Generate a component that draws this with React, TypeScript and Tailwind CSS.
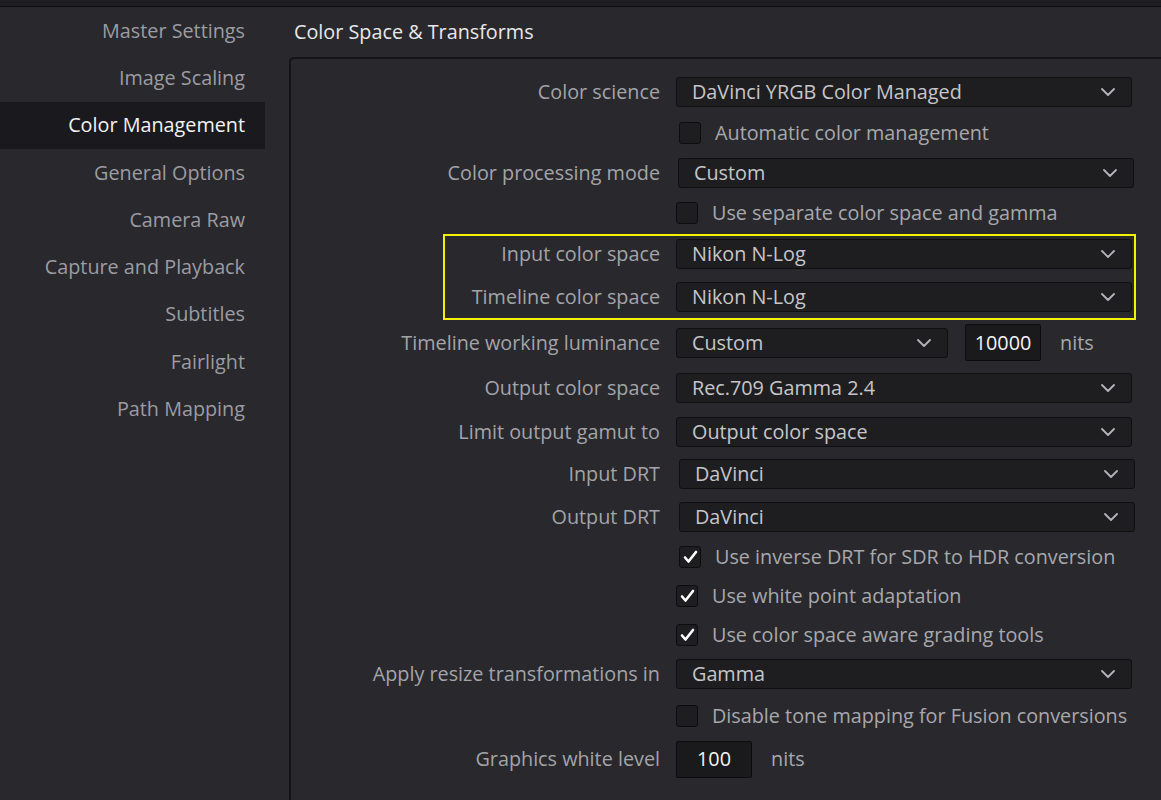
import React from "react";

type Row =
  | { kind: "select"; label: string; value: string; h: string; dx?: string }
  | { kind: "check"; text: string; checked: boolean; h: string; dx?: string }
  | { kind: "luminance"; h: string }
  | { kind: "white"; h: string };

const sidebarItems = [
  "Master Settings",
  "Image Scaling",
  "Color Management",
  "General Options",
  "Camera Raw",
  "Capture and Playback",
  "Subtitles",
  "Fairlight",
  "Path Mapping",
];

const rows: Row[] = [
  { kind: "select", label: "Color science", value: "DaVinci YRGB Color Managed", h: "h-[40.5px]" },
  { kind: "check", text: "Automatic color management", checked: false, h: "h-[40.5px]", dx: "pl-[3px]" },
  { kind: "select", label: "Color processing mode", value: "Custom", h: "h-[40px]", dx: "pl-[2px]" },
  { kind: "check", text: "Use separate color space and gamma", checked: false, h: "h-[40.5px]" },
  { kind: "select", label: "Input color space", value: "Nikon N-Log", h: "h-[41.5px]" },
  { kind: "select", label: "Timeline color space", value: "Nikon N-Log", h: "h-[44.5px]" },
  { kind: "luminance", h: "h-[46.5px]" },
  { kind: "select", label: "Output color space", value: "Rec.709 Gamma 2.4", h: "h-[44.5px]" },
  { kind: "select", label: "Limit output gamut to", value: "Output color space", h: "h-[42.5px]" },
  { kind: "select", label: "Input DRT", value: "DaVinci", h: "h-[42.5px]", dx: "pl-[3px]" },
  { kind: "select", label: "Output DRT", value: "DaVinci", h: "h-[42px]", dx: "pl-[3px]" },
  { kind: "check", text: "Use inverse DRT for SDR to HDR conversion", checked: true, h: "h-[39.5px]", dx: "pl-[3px]" },
  { kind: "check", text: "Use white point adaptation", checked: true, h: "h-[38px]" },
  { kind: "check", text: "Use color space aware grading tools", checked: true, h: "h-[39px]" },
  { kind: "select", label: "Apply resize transformations in", value: "Gamma", h: "h-[40.5px]" },
  { kind: "check", text: "Disable tone mapping for Fusion conversions", checked: false, h: "h-[42.5px]" },
  { kind: "white", h: "h-[44px]" },
];

const Chevron = () => (
  <svg width="14" height="8" viewBox="0 0 14 8" fill="none">
    <path d="M1 1l6 6 6-6" stroke="#b4b4b8" strokeWidth="1.8" strokeLinecap="round" strokeLinejoin="round" />
  </svg>
);

const Select = ({ value, w = "w-[456px]" }: { value: string; w?: string }) => (
  <div
    className={`${w} h-[30px] flex items-center justify-between pl-[15px] pr-[16px] bg-[#1e1e21] border border-[#0f0f11] rounded-[3px] text-[#c6c6c8]`}
  >
    <span className="leading-none">{value}</span>
    <Chevron />
  </div>
);

const Checkbox = ({ checked }: { checked: boolean }) => (
  <div className="w-[22px] h-[22px] shrink-0 flex items-center justify-center bg-[#1e1e21] border border-[#0d0d0f] rounded-[3px]">
    {checked && (
      <svg width="15" height="14" viewBox="0 0 15 14" fill="none">
        <path d="M2 7.5l3.5 4L13 2" stroke="#ffffff" strokeWidth="2.6" strokeLinecap="round" strokeLinejoin="round" />
      </svg>
    )}
  </div>
);

const NumberBox = ({ value }: { value: string }) => (
  <div className="w-[76px] h-[37px] flex items-center justify-center bg-[#1a1a1c] border border-[#0c0c0e] rounded-[2px] text-[#f4f4f4]">
    {value}
  </div>
);

const Label = ({ children }: { children: React.ReactNode }) => (
  <div className="w-[369px] shrink-0 text-right text-[#a4a4a8] whitespace-nowrap">{children}</div>
);

const RowView = ({ row }: { row: Row }) => {
  if (row.kind === "select") {
    return (
      <div className={`${row.h} flex items-center`}>
        <Label>{row.label}</Label>
        <div className="ml-[16px]">
          <div className={row.dx ?? ""}>
            <Select value={row.value} />
          </div>
        </div>
      </div>
    );
  }
  if (row.kind === "check") {
    return (
      <div className={`${row.h} flex items-center`}>
        <div className="ml-[385px]">
          <div className={`${row.dx ?? ""} flex items-center gap-[14px]`}>
            <Checkbox checked={row.checked} />
            <span className="text-[#a8a8ac] whitespace-nowrap">{row.text}</span>
          </div>
        </div>
      </div>
    );
  }
  if (row.kind === "luminance") {
    return (
      <div className={`${row.h} flex items-center`}>
        <Label>Timeline working luminance</Label>
        <div className="ml-[16px] flex items-center">
          <Select value="Custom" w="w-[272px]" />
          <div className="ml-[17px]">
            <NumberBox value="10000" />
          </div>
          <span className="ml-[19px] text-[#a8a8ac]">nits</span>
        </div>
      </div>
    );
  }
  return (
    <div className={`${row.h} flex items-center`}>
      <Label>Graphics white level</Label>
      <div className="ml-[16px] flex items-center">
        <NumberBox value="100" />
        <span className="ml-[19px] text-[#a8a8ac]">nits</span>
      </div>
    </div>
  );
};

export default function App() {
  return (
    <div
      className="w-[1161px] h-[800px] overflow-hidden bg-[#28282d] flex flex-col text-[19.8px]"
      style={{ fontFamily: '"Open Sans", "Noto Sans", sans-serif' }}
    >
      <div className="h-[7px] shrink-0 bg-[#1e1e22] border-b border-[#0e0e11]" />
      <div className="flex flex-1 min-h-0">
        {/* sidebar */}
        <div className="w-[289px] shrink-0 flex flex-col">
          {sidebarItems.map((item) => {
            const active = item === "Color Management";
            return (
              <div
                key={item}
                className={`w-[265px] h-[47.25px] flex items-center justify-end pr-[20px] ${
                  active ? "bg-[#1a1a1e] text-[#f2f2f4]" : "text-[#9c9ca2]"
                }`}
              >
                {item}
              </div>
            );
          })}
        </div>

        {/* main */}
        <div className="flex-1 flex flex-col min-w-0">
          <div className="h-[50px] shrink-0 flex items-center pl-[5px] text-[#e8e8ea]">
            Color Space &amp; Transforms
          </div>
          <div className="relative flex-1 w-[900px] border-l-2 border-t-2 border-[#141417] rounded-tl-[5px] pt-[13px]">
            {rows.map((row, i) => (
              <RowView key={i} row={row} />
            ))}
            <div className="absolute left-[152px] top-[175px] w-[693px] h-[86px] border-2 border-[#f2f200] pointer-events-none" />
          </div>
        </div>
      </div>
    </div>
  );
}
